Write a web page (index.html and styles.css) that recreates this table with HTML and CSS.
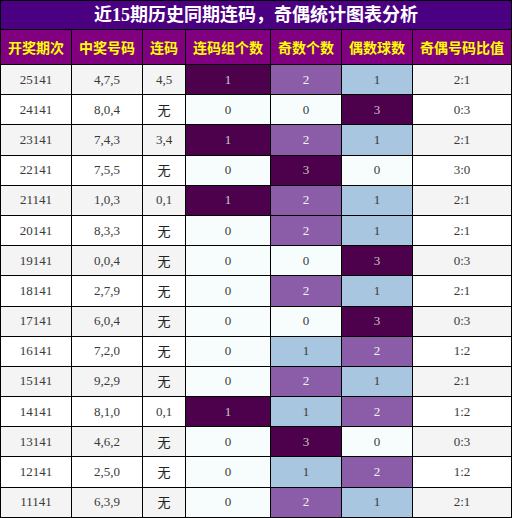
FILE: index.html
```html
<!DOCTYPE html>
<html lang="zh">
<head>
  <meta charset="UTF-8" />
  <title>近15期历史同期连码，奇偶统计图表分析</title>
  <link rel="stylesheet" href="styles.css">
</head>
<body>
  <table class="stats">
    <colgroup>
      <col class="c1"><col class="c2"><col class="c3"><col class="c4"><col class="c5"><col class="c6"><col class="c7">
    </colgroup>
    <tr class="title-row">
      <th colspan="7">近15期历史同期连码，奇偶统计图表分析</th>
    </tr>
    <tr class="head-row">
      <th>开奖期次</th>
      <th>中奖号码</th>
      <th>连码</th>
      <th>连码组个数</th>
      <th>奇数个数</th>
      <th>偶数球数</th>
      <th>奇偶号码比值</th>
    </tr>
    <tr class="odd"><td>25141</td><td>4,7,5</td><td>4,5</td><td class="v3">1</td><td class="v2">2</td><td class="v1">1</td><td>2:1</td></tr>
    <tr><td>24141</td><td>8,0,4</td><td class="cn">无</td><td class="v0">0</td><td class="v0">0</td><td class="v3">3</td><td>0:3</td></tr>
    <tr class="odd"><td>23141</td><td>7,4,3</td><td>3,4</td><td class="v3">1</td><td class="v2">2</td><td class="v1">1</td><td>2:1</td></tr>
    <tr><td>22141</td><td>7,5,5</td><td class="cn">无</td><td class="v0">0</td><td class="v3">3</td><td class="v0">0</td><td>3:0</td></tr>
    <tr class="odd"><td>21141</td><td>1,0,3</td><td>0,1</td><td class="v3">1</td><td class="v2">2</td><td class="v1">1</td><td>2:1</td></tr>
    <tr><td>20141</td><td>8,3,3</td><td class="cn">无</td><td class="v0">0</td><td class="v2">2</td><td class="v1">1</td><td>2:1</td></tr>
    <tr class="odd"><td>19141</td><td>0,0,4</td><td class="cn">无</td><td class="v0">0</td><td class="v0">0</td><td class="v3">3</td><td>0:3</td></tr>
    <tr><td>18141</td><td>2,7,9</td><td class="cn">无</td><td class="v0">0</td><td class="v2">2</td><td class="v1">1</td><td>2:1</td></tr>
    <tr class="odd"><td>17141</td><td>6,0,4</td><td class="cn">无</td><td class="v0">0</td><td class="v0">0</td><td class="v3">3</td><td>0:3</td></tr>
    <tr><td>16141</td><td>7,2,0</td><td class="cn">无</td><td class="v0">0</td><td class="v1">1</td><td class="v2">2</td><td>1:2</td></tr>
    <tr class="odd"><td>15141</td><td>9,2,9</td><td class="cn">无</td><td class="v0">0</td><td class="v2">2</td><td class="v1">1</td><td>2:1</td></tr>
    <tr><td>14141</td><td>8,1,0</td><td>0,1</td><td class="v3">1</td><td class="v1">1</td><td class="v2">2</td><td>1:2</td></tr>
    <tr class="odd"><td>13141</td><td>4,6,2</td><td class="cn">无</td><td class="v0">0</td><td class="v3">3</td><td class="v0">0</td><td>0:3</td></tr>
    <tr><td>12141</td><td>2,5,0</td><td class="cn">无</td><td class="v0">0</td><td class="v1">1</td><td class="v2">2</td><td>1:2</td></tr>
    <tr class="odd"><td>11141</td><td>6,3,9</td><td class="cn">无</td><td class="v0">0</td><td class="v2">2</td><td class="v1">1</td><td>2:1</td></tr>
  </table>
</body>
</html>
```

FILE: styles.css
```css
body {
  margin: 0;
  font-family: "Liberation Serif", "Noto Sans CJK SC", serif;
  background: #fff;
}
.stats {
  border-collapse: collapse;
  width: 511px;
  table-layout: fixed;
}
.c1 { width: 71px; }
.c2 { width: 71px; }
.c3 { width: 43px; }
.c4 { width: 85px; }
.c5 { width: 71px; }
.c6 { width: 71px; }
.c7 { width: 99px; }
.stats th, .stats td {
  border: 1px solid #000;
  padding: 0;
  text-align: center;
  white-space: nowrap;
}
.title-row th {
  background: #4b0082;
  color: #fff;
  font-size: 18px;
  font-weight: bold;
  height: 28px;
  line-height: 26px;
}
.head-row th {
  background: #800080;
  color: #ffff00;
  font-family: "Noto Sans CJK SC", sans-serif;
  font-size: 14px;
  font-weight: bold;
  height: 34px;
}
.stats td {
  height: 29.2px;
  font-size: 13px;
  line-height: 16px;
  color: #3a3a3a;
  background: #fff;
}
.stats tr.odd td {
  background: #f4f4f4;
}
.stats td.cn {
  font-family: "Noto Sans CJK SC", sans-serif;
  font-size: 13px;
  color: #222;
}
.stats tr td.v0 { background: #f7fcfd; color: #3a3a3a; }
.stats tr td.v1 { background: #a9c6e0; color: #3a3a3a; }
.stats tr td.v2 { background: #8b5da9; color: #f2f2f2; }
.stats tr td.v3 { background: #4d004b; color: #c8c8c8; }
```
